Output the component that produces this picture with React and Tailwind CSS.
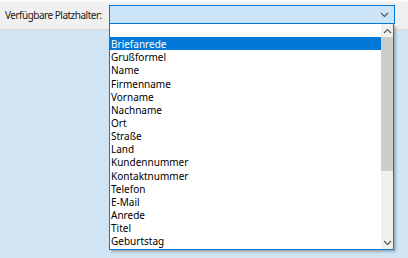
import React from "react";

const items = [
  "",
  "Briefanrede",
  "Grußformel",
  "Name",
  "Firmenname",
  "Vorname",
  "Nachname",
  "Ort",
  "Straße",
  "Land",
  "Kundennummer",
  "Kontaktnummer",
  "Telefon",
  "E-Mail",
  "Anrede",
  "Titel",
  "Geburtstag",
];

function Chevron({ up = false, className = "" }) {
  return (
    <svg width="9" height="6" viewBox="0 0 9 6" className={className}>
      <path
        d={up ? "M1 5 L4.5 1.5 L8 5" : "M1 1 L4.5 4.5 L8 1"}
        fill="none"
        stroke="#555"
        strokeWidth="1.2"
      />
    </svg>
  );
}

export default function App() {
  return (
    <div
      className="relative w-[408px] h-[258px] overflow-hidden bg-[#d0e4f3] text-[10px] text-black"
      style={{ fontFamily: '"Noto Sans", "Open Sans", sans-serif' }}
    >
      {/* toolbar strip */}
      <div className="h-[30px] bg-[#f0f0f0] border-t-2 border-t-[#fafafa] border-b border-b-[#d8d8d8] flex items-start pl-[5px]">
        <span className="w-[104px] shrink-0 mt-[7px] leading-[13px] whitespace-nowrap tracking-[-0.5px] text-[#1a1a1a]">
          Verfügbare Platzhalter:
        </span>
        <div className="mt-[3px] w-[286px] h-[19px] bg-[#cce4f7] border border-[#0078d7] flex items-center justify-end pr-[5px]">
          <Chevron />
        </div>
      </div>

      {/* open dropdown */}
      <div className="absolute left-[109px] top-[24px] w-[285px] h-[226px] bg-white border-x border-b border-[#0078d7] shadow-[2px_2px_2px_rgba(0,0,0,0.25)] flex">
        <div className="flex-1 overflow-hidden">
          {items.map((t, i) => (
            <div
              key={i}
              className={
                "h-[13.15px] leading-[14px] pl-[1px] whitespace-nowrap " +
                (i === 1 ? "bg-[#0078d7] text-white" : "")
              }
            >
              {t}
            </div>
          ))}
        </div>
        <div className="w-[12px] bg-[#f0f0f0] flex flex-col">
          <div className="h-[13px] flex items-center justify-center">
            <Chevron up />
          </div>
          <div className="h-[134px] bg-[#cdcdcd]" />
          <div className="flex-1" />
          <div className="h-[13px] flex items-center justify-center">
            <Chevron />
          </div>
        </div>
      </div>
    </div>
  );
}
